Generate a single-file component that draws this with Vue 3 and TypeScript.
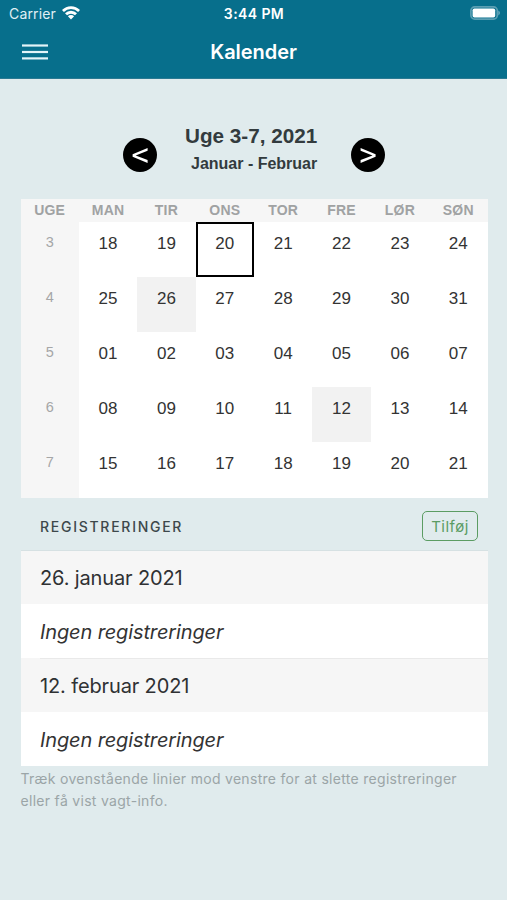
<script setup lang="ts">
interface Week {
  number: number
  days: string[]
}

interface Registration {
  date: string
  text: string
}

const headings: string[] = ['UGE', 'MAN', 'TIR', 'ONS', 'TOR', 'FRE', 'LØR', 'SØN']

const weeks: Week[] = [
  { number: 3, days: ['18', '19', '20', '21', '22', '23', '24'] },
  { number: 4, days: ['25', '26', '27', '28', '29', '30', '31'] },
  { number: 5, days: ['01', '02', '03', '04', '05', '06', '07'] },
  { number: 6, days: ['08', '09', '10', '11', '12', '13', '14'] },
  { number: 7, days: ['15', '16', '17', '18', '19', '20', '21'] },
]

const registrations: Registration[] = [
  { date: '26. januar 2021', text: 'Ingen registreringer' },
  { date: '12. februar 2021', text: 'Ingen registreringer' },
]

const isToday = (week: Week, day: string): boolean => week.number === 3 && day === '20'
const isMarked = (week: Week, day: string): boolean =>
  (week.number === 4 && day === '26') || (week.number === 6 && day === '12')
</script>

<template>
  <div class="screen">
    <header class="top">
      <div class="status">
        <div class="carrier">
          <span class="carrier-name">Carrier</span>
          <svg class="wifi" width="18" height="14" viewBox="0 0 18 14">
            <path d="M0 4.1 A12.6 12.6 0 0 1 18 4.1 L16.1 6.1 A9.9 9.9 0 0 0 1.9 6.1 Z" />
            <path d="M3 7.3 A8.4 8.4 0 0 1 15 7.3 L13 9.3 A5.7 5.7 0 0 0 5 9.3 Z" />
            <path d="M5.9 10.2 A4.3 4.3 0 0 1 12.1 10.2 L9 13.5 Z" />
          </svg>
        </div>
        <div class="clock">3:44 PM</div>
        <svg class="battery" width="30" height="14" viewBox="0 0 30 14">
          <rect x="0.9" y="0.9" width="26.4" height="12.2" rx="3.8" class="battery-case" />
          <rect x="2.6" y="2.5" width="22.6" height="9" rx="1.8" class="battery-fill" />
          <path d="M28.3 4.6 Q30 5.6 30 7 Q30 8.4 28.3 9.4 Z" class="battery-tip" />
        </svg>
      </div>
      <div class="toolbar">
        <button class="menu" aria-label="Menu">
          <svg width="26" height="16" viewBox="0 0 26 16">
            <rect x="0" y="0.4" width="26" height="2.2" />
            <rect x="0" y="6.9" width="26" height="2.2" />
            <rect x="0" y="13.3" width="26" height="2.2" />
          </svg>
        </button>
        <h1 class="title">Kalender</h1>
      </div>
    </header>

    <main class="content">
      <div class="period">
        <button class="arrow" aria-label="Forrige">
          <svg width="34" height="34" viewBox="0 0 34 34">
            <path d="M9.6 16.2 L24.6 9.9 V12.8 L12.7 17.4 L24.6 22.1 V25 L9.6 18.7 Z" />
          </svg>
        </button>
        <div class="period-text">
          <div class="weeks-label">Uge 3-7, 2021</div>
          <div class="months-label">Januar - Februar</div>
        </div>
        <button class="arrow" aria-label="Næste">
          <svg width="34" height="34" viewBox="0 0 34 34">
            <path d="M24.6 16.2 L9.6 9.9 V12.8 L21.5 17.4 L9.6 22.1 V25 L24.6 18.7 Z" />
          </svg>
        </button>
      </div>

      <section class="calendar">
        <div v-for="heading in headings" :key="heading" class="heading">{{ heading }}</div>
        <template v-for="week in weeks" :key="week.number">
          <div class="week-number">{{ week.number }}</div>
          <div
            v-for="day in week.days"
            :key="day"
            class="day"
            :class="{ today: isToday(week, day), marked: isMarked(week, day) }"
          >
            {{ day }}
          </div>
        </template>
      </section>

      <section class="registrations">
        <div class="list-header">
          <h2 class="list-title">REGISTRERINGER</h2>
          <button class="add">Tilføj</button>
        </div>
        <div v-for="item in registrations" :key="item.date" class="group">
          <div class="row date">{{ item.date }}</div>
          <div class="row entry">{{ item.text }}</div>
        </div>
      </section>

      <p class="hint">
        Træk ovenstående linier mod venstre for at slette registreringer<br />eller få vist vagt-info.
      </p>
    </main>
  </div>
</template>

<style>
body {
  margin: 0;
  background: #e0ebed;
}
</style>

<style scoped>
.screen {
  width: 507px;
  height: 900px;
  overflow: hidden;
  background: #e0ebed;
  color: #333638;
  font-family: Inter, "Liberation Sans", sans-serif;
}

button {
  padding: 0;
  border: 0;
  font: inherit;
}

.top {
  box-sizing: border-box;
  height: 79px;
  border-bottom: 1px solid #2a7a93;
  background: #076f8c;
  color: #fff;
}

.status {
  display: grid;
  grid-template-columns: 1fr auto 1fr;
  align-items: center;
  height: 27px;
  padding: 0 7px 0 9px;
}

.carrier {
  display: flex;
  align-items: center;
  gap: 6px;
}

.carrier-name {
  color: #e0f0f5;
  font-size: 14px;
  letter-spacing: 0.15px;
}

.wifi {
  fill: #fff;
  margin-top: -1px;
}

.clock {
  margin-right: 1px;
  font-size: 14px;
  font-weight: 600;
  letter-spacing: 0.4px;
}

.battery {
  justify-self: end;
  margin-top: -1px;
}

.battery-case {
  fill: none;
  stroke: #5b9fb3;
  stroke-width: 1.7;
}

.battery-fill {
  fill: #fff;
}

.battery-tip {
  fill: #6ba9bb;
}

.toolbar {
  display: grid;
  grid-template-columns: 1fr auto 1fr;
  align-items: center;
  height: 50px;
  padding: 0 22px;
}

.menu {
  width: 26px;
  background: none;
}

.menu svg {
  display: block;
  margin-top: -1px;
  fill: #e3f4f8;
}

.title {
  margin: 0;
  font-size: 20px;
  font-weight: 600;
  line-height: 24px;
  letter-spacing: -0.05px;
}

.content {
  padding: 0 19.5px 0 20.5px;
}

.period {
  display: flex;
  justify-content: center;
  align-items: center;
  height: 120px;
}

.arrow {
  width: 34px;
  height: 34px;
  margin-top: 32px;
  border-radius: 50%;
  background: #000;
}

.arrow svg {
  display: block;
  fill: #fff;
}

.period-text {
  width: 160px;
  margin: 21px 33.5px 0 0;
  color: #333b3e;
  font-family: "Liberation Sans", Arial, sans-serif;
  font-weight: 700;
  text-align: right;
}

.weeks-label {
  font-size: 20.7px;
  line-height: 26px;
}

.months-label {
  padding-top: 2px;
  font-size: 16px;
  line-height: 26px;
}

.calendar {
  display: grid;
  grid-template-columns: repeat(8, 1fr);
  grid-template-rows: 23px repeat(5, 55px);
  height: 298.5px;
  background: linear-gradient(to right, #f6f6f6 12.4%, #fff 12.4%);
  font-family: "Liberation Sans", Arial, sans-serif;
  text-align: center;
}

.heading {
  background: #f6f6f6;
  color: #a0a2a3;
  font-size: 14px;
  font-weight: 700;
  line-height: 22px;
  letter-spacing: 0.2px;
}

.week-number {
  color: #a5a6a7;
  font-size: 14.5px;
  line-height: 40px;
}

.day {
  box-sizing: border-box;
  color: #333;
  font-size: 17px;
  line-height: 43px;
}

.today {
  border: 2px solid #000;
  line-height: 39px;
}

.marked {
  background: #f2f2f2;
}

.list-header {
  box-sizing: border-box;
  display: flex;
  justify-content: space-between;
  align-items: center;
  height: 53.5px;
  padding: 5px 9.5px 0 19.5px;
  border-bottom: 1px solid #d6e1e3;
}

.list-title {
  margin: 0;
  color: #3d484b;
  font-size: 14px;
  font-weight: 500;
  letter-spacing: 1.73px;
}

.add {
  box-sizing: border-box;
  width: 56px;
  height: 30px;
  border: 1.5px solid #5b9c63;
  border-radius: 5px;
  background: none;
  color: #5b9c63;
  font-size: 15px;
  letter-spacing: 0.5px;
}

.group + .group {
  background: linear-gradient(to right, #f6f6f6 19.5px, #e9e9e9 19.5px);
  padding-top: 1px;
}

.row {
  box-sizing: border-box;
  display: flex;
  align-items: center;
  padding-left: 19.5px;
  font-size: 20px;
  letter-spacing: -0.13px;
}

.date {
  height: 53px;
  background: #f6f6f6;
  color: #2f3133;
}

.entry {
  height: 54px;
  padding-top: 1px;
  background: #fff;
  color: #333;
  font-style: italic;
}

.hint {
  margin: 2px 0 0;
  color: #9ba5a7;
  font-size: 14px;
  line-height: 22px;
  letter-spacing: 0.3px;
  white-space: nowrap;
}
</style>
